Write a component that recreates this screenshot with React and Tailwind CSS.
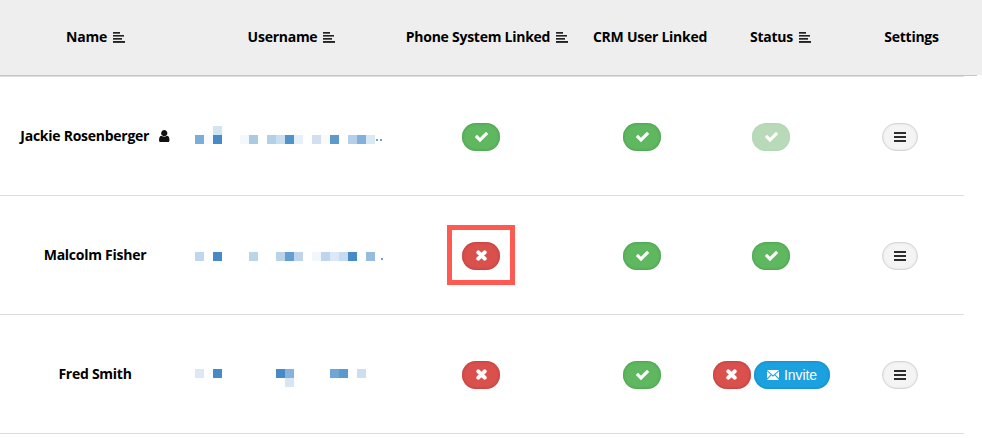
import React from "react";

const SortIcon = () => (
  <svg viewBox="0 0 12 11" className="mt-px h-[11px] w-3 shrink-0" fill="#222">
    <rect x="0" y="0" width="7" height="1.7" />
    <rect x="0" y="3" width="11" height="1.6" />
    <rect x="0" y="6" width="9" height="1.7" />
    <rect x="0" y="9" width="12" height="1.9" />
  </svg>
);

const Check = () => (
  <svg viewBox="121 334 1550 1188" className="mt-px h-[10px] w-[13px]" fill="#fff">
    <path d="M1671 566q0 40-28 68l-724 724-136 136q-28 28-68 28t-68-28l-136-136-362-362q-28-28-28-68t28-68l136-136q28-28 68-28t68 28l294 295 656-657q28-28 68-28t68 28l136 136q28 28 28 68z" />
  </svg>
);

const Cross = () => (
  <svg viewBox="0 0 11 11" className="h-[11px] w-[11px]" fill="none" stroke="#fff" strokeWidth="4" strokeLinecap="round">
    <path d="M2.3 2.3L8.7 8.7M8.7 2.3L2.3 8.7" />
  </svg>
);

const User = () => (
  <svg viewBox="256 128 1280 1536" className="h-[12.5px] w-[10.5px] shrink-0" fill="#111">
    <path d="M1536 1399q0 109-62.5 187t-150.5 78h-854q-88 0-150.5-78t-62.5-187q0-85 8.5-160.5t31.5-152 58.5-131 94-89 134.5-34.5q131 128 313 128t313-128q76 0 134.5 34.5t94 89 58.5 131 31.5 152 8.5 160.5zm-256-887q0 159-112.5 271.5t-271.5 112.5-271.5-112.5-112.5-271.5 112.5-271.5 271.5-112.5 271.5 112.5 112.5 271.5z" />
  </svg>
);

const Envelope = () => (
  <svg viewBox="0 0 12 10" className="h-[10px] w-3" fill="#fff">
    <path d="M0 0H12L6 5.2Z" />
    <path d="M0 1.2L3.7 4.6L0 8.3Z" />
    <path d="M12 1.2L8.3 4.6L12 8.3Z" />
    <path d="M0 10L4.4 5.3L6 6.7L7.6 5.3L12 10Z" />
  </svg>
);

const Bars = () => (
  <svg viewBox="0 0 12 10" className="h-[10px] w-3" fill="#2d2d2d">
    <rect width="12" height="2" />
    <rect y="4" width="12" height="2" />
    <rect y="8" width="12" height="2" />
  </svg>
);

const PILL = "flex h-7 w-[38px] items-center justify-center rounded-[14px] ";
const Yes = ({ faded }) => (
  <button className={PILL + (faded ? "bg-[#b9dab9] shadow-[inset_0_0_2px_#a5cda5]" : "bg-[#5fb760] shadow-[inset_0_0_3px_#3f9440]")}>
    <Check />
  </button>
);
const No = () => (
  <button className={PILL + "bg-[#d9504d] shadow-[inset_0_0_3px_#ad3834]"}>
    <Cross />
  </button>
);
const Invite = () => (
  <button className="flex h-7 w-[76px] items-center justify-center gap-[5px] rounded-[14px] bg-[#1ba1e0] pl-px font-['Liberation_Sans',sans-serif] text-sm font-normal tracking-[-0.1px] text-white shadow-[inset_0_0_3px_#1280b5]">
    <Envelope />
    Invite
  </button>
);
const Menu = () => (
  <button className="flex h-7 w-9 items-center justify-center rounded-[14px] border border-[#d6d6d6] bg-[#f4f4f4] shadow-[inset_0_0_2px_#d4d4d4]">
    <Bars />
  </button>
);

const headers = [
  { label: "Name", sort: true },
  { label: "Username", sort: true },
  { label: "Phone System Linked", sort: true },
  { label: "CRM User Linked", sort: false },
  { label: "Status", sort: true },
  { label: "Settings", sort: false },
];

const _ = "transparent";
const rows = [
  {
    name: "Jackie Rosenberger",
    user: true,
    pad: "pt-[49px]",
    cells: [
      _, _, "#d2e4f2", _, _, _, _, _, _, _, _, _, _, _, _, _, _, _, _, _,
      "#7badd9", "#f9fafd", "#468bc7", _, _, "#f3f8fd", "#aacae4", _, "#b2d0e8", "#cbdeef",
      "#5093cb", "#e7effa", _, "#d0e0f1", "#f9fafc", "#5b9acd", _, "#b4d0e9", "#82afdc", "#dae8f4",
    ],
    dots: 2,
    phone: <Yes />,
    crm: <Yes />,
    status: <Yes faded />,
  },
  {
    name: "Malcolm Fisher",
    pad: "pt-[56px]",
    cells: [
      "#bfd6ed", _, "#468bc7", _, _, _, "#bad5e8", _, _, "#bad3e7",
      "#659ed2", "#bed3ec", _, "#f3f6fb", "#bdd5ed", "#dde8f6", "#c6dbed", "#468bc7", _, "#96bddd",
    ],
    dots: 1,
    phone: (
      <div className="mb-0.5 flex h-[60px] w-[68px] items-center justify-center border-[5px] border-[#ff5a52] pt-0.5">
        <No />
      </div>
    ),
    crm: <Yes />,
    status: <Yes />,
  },
  {
    name: "Fred Smith",
    pad: "pt-[54px]",
    cells: [
      "#dce8f3", _, "#468bc7", _, _, _, _, _, _, "#468bc7",
      "#86b2dc", _, _, _, _, "#6ea6d5", "#5b9acf", _, "#cbdef2", _,
      _, _, _, _, _, _, _, _, _, _, "#d8e5f3", _, _, _, _, _, _, _, _, _,
    ],
    dots: 0,
    phone: <No />,
    crm: <Yes />,
    status: (
      <>
        <No />
        <Invite />
      </>
    ),
  },
];

export default function App() {
  return (
    <div className="h-[438px] w-[982px] overflow-hidden bg-white font-['Open_Sans','Noto_Sans',sans-serif] text-sm font-bold tracking-[-0.26px] text-black">
      <div className="grid h-[75px] grid-cols-[191px_201px_190px_136px_125px_137px] bg-[#eeeeee] pb-0.5">
        {headers.map((h) => (
          <div key={h.label} className="flex items-center justify-center gap-1.5 whitespace-nowrap">
            <span>{h.label}</span>
            {h.sort && <SortIcon />}
          </div>
        ))}
      </div>
      <div className="h-px w-[977px] bg-[#c6c6c6]" />
      <div className="w-[964px] border-b border-[#dddddd]">
        {rows.map((r) => (
          <div key={r.name} className="grid h-[119px] grid-cols-[190px_195px_192px_130px_128px_129px] border-t border-[#dddddd]">
            <div className="flex items-center justify-center gap-2.5 whitespace-nowrap">
              <span>{r.name}</span>
              {r.user && <User />}
            </div>
            <div className={"flex items-start pl-[5px] " + r.pad}>
              <div className="grid auto-rows-[9px] grid-cols-[repeat(20,9px)]">
                {r.cells.map((c, i) => (
                  <span key={i} style={{ backgroundColor: c }} />
                ))}
              </div>
              <div className={"flex gap-0.5 " + (r.dots === 2 ? "ml-px mt-[13px]" : "ml-1.5 mt-1.5")}>
                {Array.from({ length: r.dots }, (_x, i) => (
                  <span key={i} className="size-0.5 bg-[#6da3cf]" />
                ))}
              </div>
            </div>
            <div className="flex items-center justify-center pt-px">{r.phone}</div>
            <div className="flex items-center justify-center pt-px">{r.crm}</div>
            <div className="flex items-center justify-center gap-[3px] pt-px">{r.status}</div>
            <div className="flex items-center justify-center pt-px">
              <Menu />
            </div>
          </div>
        ))}
      </div>
    </div>
  );
}
